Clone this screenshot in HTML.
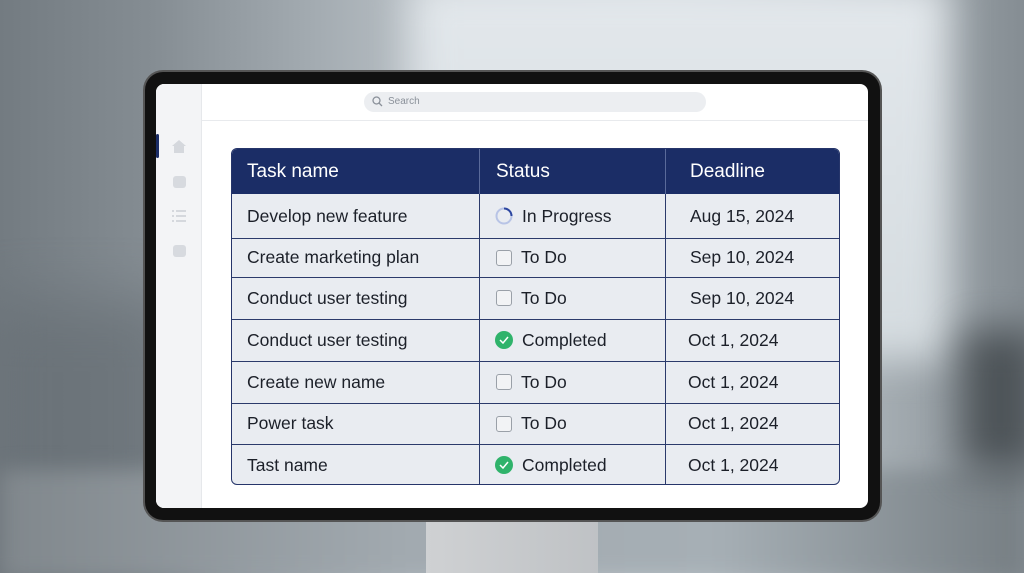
<!DOCTYPE html>
<html><head><meta charset="utf-8"><style>
*{margin:0;padding:0;box-sizing:border-box}
html,body{width:1024px;height:573px;overflow:hidden}
body{position:relative;font-family:"Liberation Sans",sans-serif;
background:linear-gradient(90deg,#737b81 0%,#858d93 15%,#a2aab0 30%,#bfc6cb 45%,#c9d0d5 65%,#b3bbc0 80%,#858d93 100%);}
.a{position:absolute}
.win{left:410px;top:-20px;width:540px;height:380px;background:linear-gradient(180deg,#e3e8ec,#d4dbdf);filter:blur(20px)}
.dark{left:-20px;top:300px;width:200px;height:300px;background:#666e74;filter:blur(30px);opacity:.7}
.floor{left:0;top:470px;width:1024px;height:110px;background:linear-gradient(90deg,#80878c,#a2aab0 40%,#a6afb5 70%,#767e83);filter:blur(10px)}
.rdark{left:960px;top:330px;width:80px;height:140px;background:#3e4448;filter:blur(20px);opacity:.8}
.stand{left:426px;top:515px;width:172px;height:58px;background:linear-gradient(90deg,#cfd1d3,#bfc2c5)}
.bezel{left:145px;top:72px;width:735px;height:448px;background:#111;border-radius:18px;box-shadow:0 0 0 2px #555}
.screen{left:156px;top:84px;width:712px;height:424px;background:#fff;border-radius:8px;overflow:hidden}
.side{left:0;top:0;width:46px;height:424px;background:#f3f4f6;border-right:1px solid #e6e8eb}
.sideic{position:absolute;left:17px;width:13px;height:12px;background:#d7dadf;border-radius:3px}
.search{left:208px;top:8px;width:342px;height:20px;background:#eceef1;border-radius:10px;font-size:10px;color:#8a9099;padding:4px 0 0 24px}
.hline{left:46px;top:36px;width:666px;height:1px;background:#e8eaed}
.tw{position:absolute;left:75px;top:64px;width:609px;height:337px;border:1px solid #26356a;border-radius:6px;overflow:hidden;background:#e9ecf1;font-size:17.5px;color:#1c2029}
.hd{position:absolute;left:0;top:0;width:100%;height:45px;background:#1b2d66}
.r{position:absolute;left:0;width:100%;border-top:1px solid #2b3a6b}
.vl{position:absolute;top:0;width:1px;height:100%;background:#2b3a6b}
.c{position:absolute;display:flex;align-items:center;gap:9px;white-space:nowrap}
.h{color:#fff;font-size:19px}
.cb{width:16px;height:16px;border:1.5px solid #9aa0a8;border-radius:3px;background:#f2f3f5}
.ok{width:18px;height:18px;border-radius:50%;background:#2fb36b;display:flex;align-items:center;justify-content:center}
</style></head><body>
<div class="a win"></div><div class="a dark"></div><div class="a floor"></div><div class="a rdark"></div>
<div class="a stand"></div>
<div class="a bezel"></div>
<div class="a screen">
 <div class="a side">
  <div style="position:absolute;left:0;top:50px;width:3px;height:24px;background:#1b2d66;border-radius:2px"></div>
  <svg style="position:absolute;left:16px;top:56px" width="14" height="13" viewBox="0 0 14 13"><path d="M7 0L0 6h2v7h10V6h2z" fill="#d5d8dd"/></svg>
  <div class="sideic" style="top:92px"></div>
  <svg style="position:absolute;left:16px;top:126px" width="14" height="12" viewBox="0 0 14 12"><g fill="#d5d8dd"><rect x="0" y="0" width="2" height="2"/><rect x="4" y="0" width="10" height="2"/><rect x="0" y="5" width="2" height="2"/><rect x="4" y="5" width="10" height="2"/><rect x="0" y="10" width="2" height="2"/><rect x="4" y="10" width="10" height="2"/></g></svg>
  <div class="sideic" style="top:161px"></div>
 </div>
 <div class="a search"><svg style="position:absolute;left:8px;top:4px" width="11" height="11" viewBox="0 0 11 11"><circle cx="4.5" cy="4.5" r="3.5" fill="none" stroke="#8a9099" stroke-width="1.3"/><path d="M7 7l3 3" stroke="#8a9099" stroke-width="1.3"/></svg>Search</div>
 <div class="a hline"></div>
 <div class="tw">
  <div class="hd"></div>
  <div class="r" style="top:89px"></div><div class="r" style="top:128px"></div><div class="r" style="top:170px"></div>
  <div class="r" style="top:212px"></div><div class="r" style="top:254px"></div><div class="r" style="top:295px"></div>
  <div class="vl" style="left:247px;background:#5a6a9a"></div><div class="vl" style="left:433px;background:#5a6a9a"></div>
  <div class="vl" style="left:247px;top:45px;height:292px"></div><div class="vl" style="left:433px;top:45px;height:292px"></div>

  <div class="c h" style="left:15px;top:0;height:45px">Task name</div>
  <div class="c h" style="left:264px;top:0;height:45px">Status</div>
  <div class="c h" style="left:458px;top:0;height:45px">Deadline</div>

  <div class="c" style="left:15px;top:45px;height:44px">Develop new feature</div>
  <div class="c" style="left:263px;top:45px;height:44px"><svg width="18" height="18" viewBox="0 0 18 18"><circle cx="9" cy="9" r="7.5" fill="none" stroke="#b8c4e6" stroke-width="2"/><path d="M9 1.5A7.5 7.5 0 0 1 16.5 9" fill="none" stroke="#2c46a0" stroke-width="2"/></svg>In Progress</div>
  <div class="c" style="left:458px;top:45px;height:44px">Aug 15, 2024</div>

  <div class="c" style="left:15px;top:89px;height:39px">Create marketing plan</div>
  <div class="c" style="left:264px;top:89px;height:39px"><div class="cb"></div>To Do</div>
  <div class="c" style="left:458px;top:89px;height:39px">Sep 10, 2024</div>

  <div class="c" style="left:15px;top:128px;height:42px">Conduct user testing</div>
  <div class="c" style="left:264px;top:128px;height:42px"><div class="cb"></div>To Do</div>
  <div class="c" style="left:458px;top:128px;height:42px">Sep 10, 2024</div>

  <div class="c" style="left:15px;top:170px;height:42px">Conduct user testing</div>
  <div class="c" style="left:263px;top:170px;height:42px"><div class="ok"><svg width="10" height="8" viewBox="0 0 10 8"><path d="M1 4l3 3 5-6" fill="none" stroke="#fff" stroke-width="1.5"/></svg></div>Completed</div>
  <div class="c" style="left:456px;top:170px;height:42px">Oct 1, 2024</div>

  <div class="c" style="left:15px;top:212px;height:42px">Create new name</div>
  <div class="c" style="left:264px;top:212px;height:42px"><div class="cb"></div>To Do</div>
  <div class="c" style="left:456px;top:212px;height:42px">Oct 1, 2024</div>

  <div class="c" style="left:15px;top:254px;height:41px">Power task</div>
  <div class="c" style="left:264px;top:254px;height:41px"><div class="cb"></div>To Do</div>
  <div class="c" style="left:456px;top:254px;height:41px">Oct 1, 2024</div>

  <div class="c" style="left:15px;top:295px;height:42px">Tast name</div>
  <div class="c" style="left:263px;top:295px;height:42px"><div class="ok"><svg width="10" height="8" viewBox="0 0 10 8"><path d="M1 4l3 3 5-6" fill="none" stroke="#fff" stroke-width="1.5"/></svg></div>Completed</div>
  <div class="c" style="left:456px;top:295px;height:42px">Oct 1, 2024</div>
 </div>
</div>
</body></html>
